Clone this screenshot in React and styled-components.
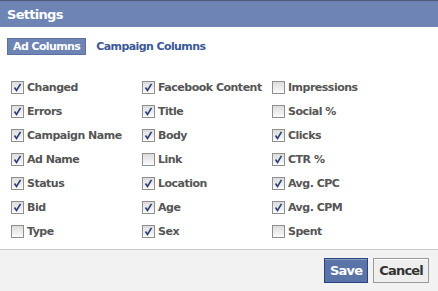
import React from "react";
import styled, { createGlobalStyle } from "styled-components";

const Global = createGlobalStyle`
  html, body { margin: 0; padding: 0; background: #fff; }
  body { font-family: Tahoma, "DejaVu Sans", "Liberation Sans", sans-serif; }
`;

const Dialog = styled.div`
  width: 438px;
  height: 291px;
  display: flex;
  flex-direction: column;
  background: #fff;
  overflow: hidden;
`;

const TopEdge = styled.div`
  height: 2px;
  background: linear-gradient(#4e5b78 50%, #6a7fae 50%);
`;

const Header = styled.div`
  height: 25px;
  background: #6d84b4;
  color: #fff;
  font-family: "DejaVu Sans", sans-serif;
  font-weight: bold;
  font-size: 13px;
  display: flex;
  align-items: center;
  padding: 0 0 0 7px;
  letter-spacing: -0.7px;
`;

const Body = styled.div`
  flex: 1;
  padding: 11px 0 0 7px;
  display: flex;
  flex-direction: column;
`;

const Tabs = styled.div`
  display: flex;
  align-items: center;
  gap: 4px;
`;

const Tab = styled.div`
  font-family: "DejaVu Sans", sans-serif;
  font-weight: bold;
  font-size: 11px;
  letter-spacing: -0.6px;
  height: 15px;
  line-height: 15px;
  padding: 0 5px;
  border: 1px solid ${(p) => (p.$active ? "#5c71a0" : "transparent")};
  background: ${(p) => (p.$active ? "#6d84b4" : "transparent")};
  color: ${(p) => (p.$active ? "#fff" : "#3b5998")};
`;

const Grid = styled.div`
  margin-top: 24px;
  margin-left: 4px;
  display: grid;
  grid-template-columns: 131px 130px 130px;
  grid-auto-rows: 24px;
`;

const Item = styled.label`
  display: flex;
  align-items: center;
  gap: 3px;
  height: 16px;
  font-family: "DejaVu Sans", sans-serif;
  font-weight: bold;
  font-size: 11px;
  letter-spacing: -0.5px;
  color: #555;
`;

const Box = styled.span`
  width: 11px;
  height: 11px;
  border: 1px solid #8f8f8f;
  background: linear-gradient(#dcdcdc, #fbfbfb);
  display: flex;
  align-items: center;
  justify-content: center;
  flex: none;
`;

const Footer = styled.div`
  height: 41px;
  border-top: 1px solid #c9c9c9;
  background: #f2f2f2;
  display: flex;
  justify-content: flex-end;
  align-items: center;
  gap: 5px;
  padding-right: 9px;
`;

const Button = styled.button`
  height: 25px;
  padding: 0 5px;
  font-family: "DejaVu Sans", sans-serif;
  font-weight: bold;
  font-size: 13px;
  letter-spacing: -0.8px;
  border: 1px solid ${(p) => (p.$primary ? "#29447e" : "#999")};
  background: ${(p) => (p.$primary ? "#5b74a8" : "#eee")};
  color: ${(p) => (p.$primary ? "#fff" : "#333")};
  box-shadow: inset 0 1px 0 ${(p) => (p.$primary ? "#8a9cc2" : "#fff")};
  cursor: pointer;
`;

const Check = () => (
  <svg width="9" height="9" viewBox="0 0 9 9">
    <path d="M1.5 4.5 L3.5 7.5 L7.5 0.8" fill="none" stroke="#2c3e78" strokeWidth="1.6" />
  </svg>
);

const cols = [
  [["Changed", 1], ["Errors", 1], ["Campaign Name", 1], ["Ad Name", 1], ["Status", 1], ["Bid", 1], ["Type", 0]],
  [["Facebook Content", 1], ["Title", 1], ["Body", 1], ["Link", 0], ["Location", 1], ["Age", 1], ["Sex", 1]],
  [["Impressions", 0], ["Social %", 0], ["Clicks", 1], ["CTR %", 1], ["Avg. CPC", 1], ["Avg. CPM", 1], ["Spent", 0]],
];

export default function App() {
  const items = [];
  for (let r = 0; r < 7; r++) {
    for (let c = 0; c < 3; c++) {
      const [label, on] = cols[c][r];
      items.push(
        <Item key={label}>
          <Box>{on ? <Check /> : null}</Box>
          {label}
        </Item>
      );
    }
  }
  return (
    <>
      <Global />
      <Dialog>
        <TopEdge />
        <Header>Settings</Header>
        <Body>
          <Tabs>
            <Tab $active>Ad Columns</Tab>
            <Tab>Campaign Columns</Tab>
          </Tabs>
          <Grid>{items}</Grid>
        </Body>
        <Footer>
          <Button $primary>Save</Button>
          <Button>Cancel</Button>
        </Footer>
      </Dialog>
    </>
  );
}
